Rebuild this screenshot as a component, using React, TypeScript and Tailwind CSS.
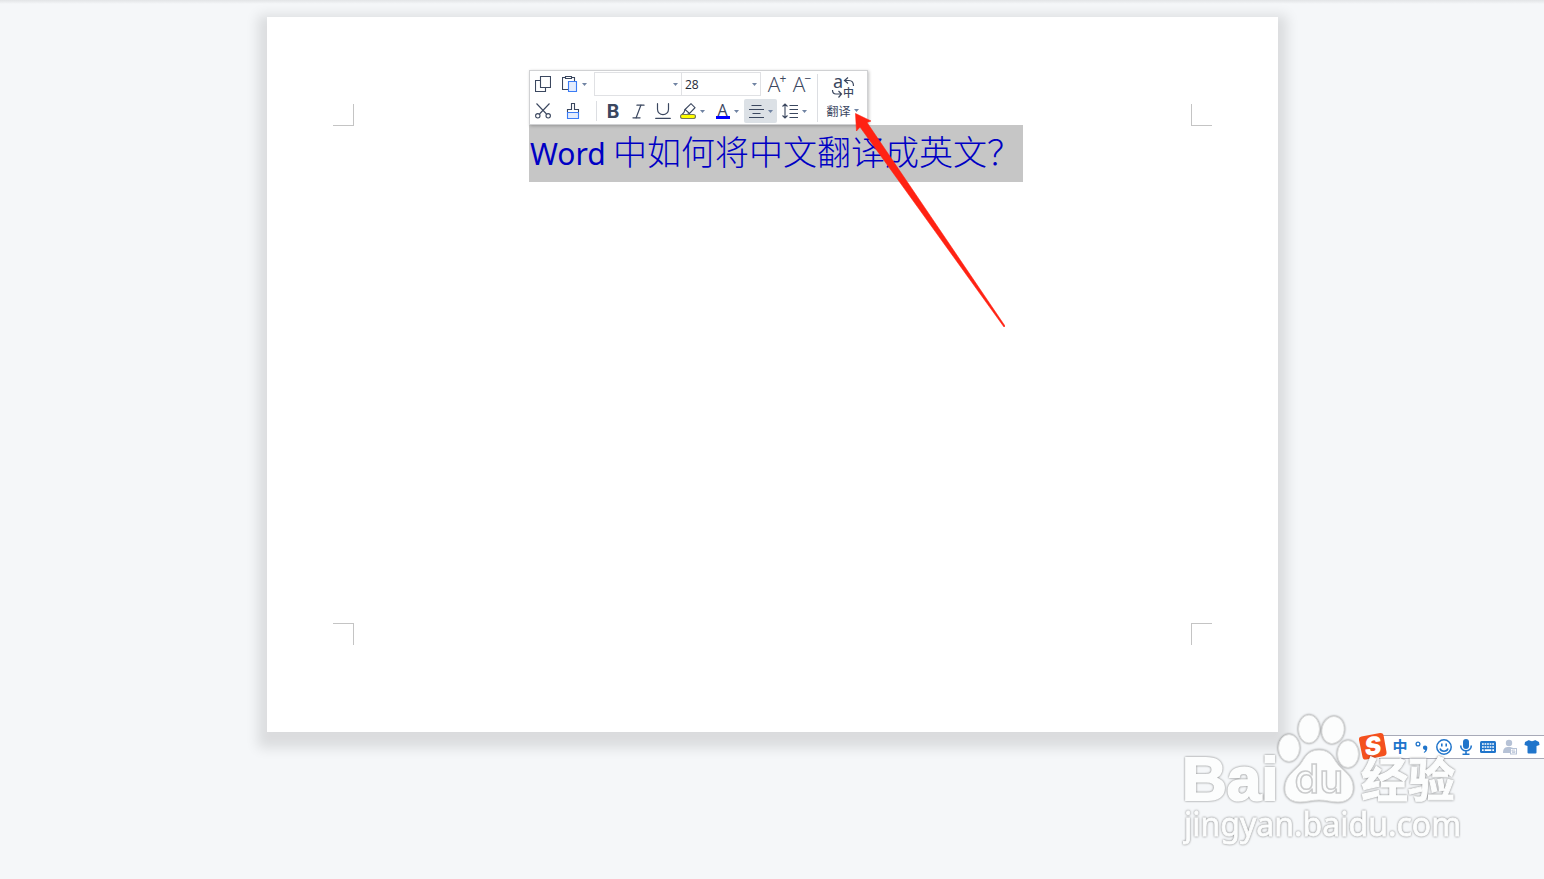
import type { ReactNode } from 'react';
import clsx from 'clsx';
import { Italic, Underline } from 'lucide-react';

interface ToolButtonProps {
  label: string;
  className?: string;
  caret?: boolean;
  children: ReactNode;
}

function Caret() {
  return (
    <svg width="5" height="3" viewBox="0 0 5 3" className="shrink-0">
      <path d="M0 0h5L2.5 3z" fill="#7083a3" />
    </svg>
  );
}

function ToolButton({ label, className, caret, children }: ToolButtonProps) {
  return (
    <button
      type="button"
      title={label}
      aria-label={label}
      className={clsx('flex h-6 items-center justify-center gap-1 leading-none', className)}
    >
      {children}
      {caret && <Caret />}
    </button>
  );
}

function CopyIcon() {
  return (
    <svg width="16" height="16" viewBox="0 0 16 16" fill="none" stroke="#3b475f" strokeWidth="1.1">
      <path d="M5.5.5h10v11h-10z" />
      <path d="M5.5 4.5h-5v11h10v-4" />
    </svg>
  );
}

function PasteIcon() {
  return (
    <svg width="16" height="16" viewBox="0 0 16 16" fill="none" stroke="#3b475f" strokeWidth="1.1">
      <path d="M6 13.500H.5v-12h3M9.500 1.500h3V5" />
      <path d="M3.500.5h6v2h-6z" />
      <path d="M6.500 5.500h8v10h-8z" fill="#e3ecfd" stroke="#3b7cf5" />
    </svg>
  );
}

function CutIcon() {
  return (
    <svg width="16" height="16" viewBox="0 0 16 16" fill="none" stroke="#3b475f" strokeWidth="1.1">
      <path d="M1.500.5L11.500 11M14.500.5L4.500 11" />
      <circle cx="2.800" cy="12.800" r="2.200" />
      <circle cx="13.200" cy="12.800" r="2.200" />
    </svg>
  );
}

function BrushIcon() {
  return (
    <svg width="14" height="16" viewBox="0 0 14 16" fill="none" strokeWidth="1.1">
      <path d="M1.500 9V6.500h4v-6h3v6h4V9" stroke="#3b475f" />
      <path d="M1.500 9.500h11v6h-11z" fill="#e3ecfd" stroke="#3b7cf5" />
    </svg>
  );
}

function HighlightIcon() {
  return (
    <svg width="16" height="16" viewBox="0 0 16 16" fill="none" stroke="#3b475f" strokeWidth="1.1">
      <path d="M5 6.500L11 .7l4 4L9.500 10.500z" />
      <path d="M5 6.500L4 9.500 2 11.500h5l2.500-1" />
      <rect x=".5" y="11.500" width="15" height="4" rx="2" fill="#ffff00" stroke="#77775a" />
    </svg>
  );
}

function CenterIcon() {
  return (
    <svg width="15" height="14" viewBox="0 0 15 14" stroke="#3b475f" strokeWidth="1.1">
      <path d="M2.500 1.500h10M0 5.500h15M3.500 9.500h8M0 13.500h15" />
    </svg>
  );
}

function SpacingIcon() {
  return (
    <svg width="16" height="16" viewBox="0 0 16 16" fill="none" stroke="#3b475f" strokeWidth="1.1">
      <path d="M3 1v14M.5 3.500L3 1l2.500 2.500M.5 12.500L3 15l2.500-2.500M7.500 2.500H16M7.500 6.500H16M7.500 10.500H16M7.500 14.500H16" />
    </svg>
  );
}

function TranslateIcon() {
  return (
    <svg width="24" height="24" viewBox="0 0 24 24" fill="none" stroke="#3b475f" strokeWidth="1.2" className="overflow-visible">
      <text x="2" y="13" fontSize="18" fill="#3b475f" stroke="none" className="font-['Noto_Sans']">a</text>
      <path d="M17 2.500l-3.500 3 3.500 3M13.500 5.500H18c3 0 4.500 1.500 4.500 5.500" />
      <path d="M1.500 15c0 3 1 4 3.500 4h5.500M7.500 16l3 3-3 3.500" />
      <text x="12" y="22" fontSize="11" fill="#3b475f" stroke="none" className="font-['Noto_Sans_CJK_SC',sans-serif] font-medium">中</text>
    </svg>
  );
}

function FloatingToolbar() {
  return (
    <div
      role="toolbar"
      aria-label="格式"
      className="absolute bottom-full left-0 flex items-center border border-[#d0d1d3] bg-white py-px text-[#3b475f] shadow-[1px_1px_3px_rgba(0,0,0,0.25)]"
    >
      <div className="flex w-[283px] flex-col gap-[3px]">
        <div className="flex items-center">
          <ToolButton label="复制" className="w-[26px]"><CopyIcon /></ToolButton>
          <ToolButton label="粘贴" className="w-[38px] pr-0.5" caret><PasteIcon /></ToolButton>
          <div className="relative flex w-[88px] items-center">
            <select aria-label="字体" className="h-6 w-full appearance-none border border-[#e0e1e4] bg-white px-1 text-xs">
              <option></option>
            </select>
            <span className="pointer-events-none absolute right-1"><Caret /></span>
          </div>
          <div className="relative -ml-px flex w-20 items-center">
            <select aria-label="字号" className="h-6 w-full appearance-none border border-[#e0e1e4] bg-white px-[3px] pt-px font-['Open_Sans'] text-xs text-[#1f2937]">
              <option>28</option>
            </select>
            <span className="pointer-events-none absolute right-1"><Caret /></span>
          </div>
          <ToolButton label="增大字号" className="ml-0.5 w-7">
            <span className="flex items-start font-['Open_Sans'] text-[21px] leading-5 font-light">
              A<span className="-ml-px text-xs leading-2.5 font-normal">+</span>
            </span>
          </ToolButton>
          <ToolButton label="减小字号" className="w-[22px]">
            <span className="flex items-start font-['Open_Sans'] text-[21px] leading-5 font-light">
              A<span className="-ml-px text-xs leading-2.5 font-normal">−</span>
            </span>
          </ToolButton>
        </div>
        <div className="flex items-center">
          <ToolButton label="剪切" className="w-[26px]"><CutIcon /></ToolButton>
          <ToolButton label="格式刷" className="w-[34px]"><BrushIcon /></ToolButton>
          <span className="mr-[3px] ml-1.5 h-5 w-px bg-[#dcdee2]" />
          <ToolButton label="加粗" className="w-[26px] font-[Inter] text-[19px] font-bold">B</ToolButton>
          <ToolButton label="倾斜" className="w-6"><Italic size={19} strokeWidth={1.5} /></ToolButton>
          <ToolButton label="下划线" className="w-[25px]"><Underline size={22} strokeWidth={1.3} /></ToolButton>
          <ToolButton label="突出显示" className="w-[35px]" caret><HighlightIcon /></ToolButton>
          <ToolButton label="字体颜色" className="w-[34px]" caret>
            <span className="w-3.5 border-b-3 border-[#0000ff] font-['Open_Sans'] text-base leading-3">A</span>
          </ToolButton>
          <ToolButton label="居中" className="w-[33px] rounded-xs bg-[#dce1e6]" caret><CenterIcon /></ToolButton>
          <ToolButton label="行距" className="w-[35px]" caret><SpacingIcon /></ToolButton>
        </div>
      </div>
      <span className="ml-1 h-12 w-px bg-[#dcdee2]" />
      <button type="button" className="flex w-[49px] flex-col items-center gap-0.5">
        <TranslateIcon />
        <span className="flex items-center gap-[3px] font-['Noto_Sans_CJK_SC',sans-serif] text-xs leading-5">
          翻译
          <Caret />
        </span>
      </button>
    </div>
  );
}

function PointerArrow() {
  return (
    <svg width="150" height="214" viewBox="0 0 150 214" className="pointer-events-none absolute -top-3 left-[326px]">
      <path d="M.5.5L16 8l-4 1.500L150 213l-1 1L5 14 1.500 18z" fill="#ff2213" stroke="#ff2213" strokeWidth=".6" />
    </svg>
  );
}

function CropMark({ className }: { className: string }) {
  return <span className={clsx('h-[22px] w-[21px] shrink-0 border-[#c4c4c4]', className)} />;
}

function SogouLogo() {
  return (
    <svg width="30" height="30" viewBox="0 0 30 30" className="relative shrink-0 overflow-visible">
      <path d="M2.500 4.500L21 1c2-.3 3 .5 3.500 2l3 17c.3 2-.5 3.500-2.500 4L7 27.500c-2 .3-3-.5-3.500-2.500L0 8c-.2-2 .5-3.200 2.500-3.500z" fill="#f4511e" />
      <text x="14" y="23" fontSize="25" fill="#fff" textAnchor="middle" transform="rotate(-8 14 15)" className="font-[Inter] font-black italic">S</text>
    </svg>
  );
}

const imeItems = [
  {
    label: '中文',
    icon: <text x="9" y="14" fontSize="15" textAnchor="middle" className="font-['Noto_Sans_CJK_SC',sans-serif] font-bold">中</text>,
  },
  {
    label: '标点',
    icon: (
      <>
        <circle cx="5" cy="6" r="1.900" fill="none" stroke="currentColor" strokeWidth="1.300" />
        <path d="M12 7.500a2.300 2.300 0 0 1 2.300 2.500c0 2.600-1.400 4.300-3.400 5v-1.200c1-.6 1.400-1.200 1.300-1.900a2.200 2.200 0 0 1-.2-4.400z" />
      </>
    ),
  },
  {
    label: '表情',
    icon: (
      <>
        <circle cx="9" cy="9" r="7.200" fill="none" stroke="currentColor" strokeWidth="1.500" />
        <path d="M6 5.500h1.600v3H6zM10.400 5.500H12v3h-1.600z" />
        <path d="M5 10.500c1 3.500 7 3.500 8 0" fill="none" stroke="currentColor" strokeWidth="1.500" />
      </>
    ),
  },
  {
    label: '语音',
    icon: (
      <>
        <rect x="6" y="1" width="6" height="10" rx="3" />
        <path d="M3.700 7.500c0 7 10.600 7 10.600 0M9 12.500V16M5.500 16.200h7" fill="none" stroke="currentColor" strokeWidth="1.600" />
      </>
    ),
  },
  {
    label: '软键盘',
    icon: (
      <>
        <rect x="1" y="3" width="16" height="12" rx="1.500" />
        <path d="M3 6h12M3 9h12" stroke="#fff" strokeWidth="1.700" strokeDasharray="1.750 .8" />
        <path d="M3 12.200h1.700M5.700 12.200h6.600M13.300 12.200H15" stroke="#fff" strokeWidth="1.700" />
      </>
    ),
  },
  {
    label: '账号',
    muted: true,
    icon: (
      <>
        <circle cx="8" cy="5" r="3.200" />
        <path d="M2 15c0-5 2-6 6-6 2 0 3.500.5 4.500 1.500H9V15z" />
        <rect x="9.500" y="10.500" width="6" height="5.500" fill="#fff" stroke="currentColor" />
        <path d="M14 12h-3v1.300h3v1.200h-3" fill="none" stroke="currentColor" strokeWidth=".8" />
      </>
    ),
  },
  {
    label: '皮肤',
    icon: <path d="M6 2c1 1.500 5 1.500 6 0l4 2 .5 3-3 1v6.500q0 1-1 1h-7q-1 0-1-1V8l-3-1L2 4z" />,
  },
];

function ImeBar() {
  return (
    <div className="absolute right-0 bottom-[117px] flex flex-row-reverse items-center">
      <div className="-ml-2.5 flex h-6 items-center border-y border-[#a8aab8] bg-white pr-px pl-2.5">
        {imeItems.map((item) => (
          <button
            key={item.label}
            type="button"
            aria-label={item.label}
            className={clsx('flex w-[22px] justify-center', item.muted ? 'text-[#b6c2d6]' : 'text-[#2075cb]')}
          >
            <svg width="18" height="18" viewBox="0 0 18 18" fill="currentColor" className="overflow-visible">{item.icon}</svg>
          </button>
        ))}
      </div>
      <SogouLogo />
    </div>
  );
}

function Watermark() {
  return (
    <svg
      width="280"
      height="136"
      viewBox="0 0 280 136"
      className="pointer-events-none absolute right-[81px] bottom-[31px] drop-shadow-[0_0_1px_rgba(0,0,0,0.5)]"
      fill="#fcfdfd"
    >
      <g stroke="#dcdddd" strokeWidth="1">
        <ellipse cx="106" cy="36" rx="10.500" ry="13.500" />
        <ellipse cx="126" cy="17" rx="10.500" ry="14" />
        <ellipse cx="150" cy="18" rx="11" ry="13.500" transform="rotate(12 150 18)" />
        <ellipse cx="165" cy="42" rx="10.500" ry="13.500" />
        <path d="M136 38c-9 0-13 5-17 12-5 8-16 12-17 25-1 10 6 15 15 15 7 0 12-2 19-2s12 2 19 2c10 0 16-6 15-16-1-12-12-16-17-24-4-7-8-12-17-12z" />
      </g>
      <text x="-1" y="88" fontSize="62" stroke="#fcfdfd" strokeWidth="2" className="font-['Liberation_Sans'] font-bold">Bai</text>
      <text x="136" y="81" fontSize="40" textAnchor="middle" stroke="#cacbcc" strokeWidth="1.500" className="font-[Inter] font-medium">du</text>
      <text x="178" y="85" fontSize="47" stroke="#fcfdfd" strokeWidth="1" className="font-['Noto_Sans_CJK_SC',sans-serif] font-bold">经验</text>
      <text x="1" y="124" fontSize="32" stroke="#fcfdfd" strokeWidth=".8" className="font-['Noto_Sans']">jingyan.baidu.com</text>
    </svg>
  );
}

export default function App() {
  return (
    <div className="relative min-h-screen overflow-hidden bg-[#f5f7f9] pt-[17px]">
      <div className="absolute inset-x-0 top-0 h-1 bg-linear-to-b from-[#e2e4e6] to-[#f5f7f9]" />
      <main className="mx-auto flex aspect-[1011/715] w-full max-w-[1011px] flex-col justify-between bg-white px-[66px] py-[87px] shadow-[0_7px_12px_9px_rgba(0,0,0,0.11)]">
        <div className="flex items-start justify-between">
          <CropMark className="border-r border-b" />
          <div className="relative mt-[21px] ml-2 flex h-[57px] w-[494px] items-center bg-[#c6c6c6]">
            <h1 className="flex items-center whitespace-nowrap text-[#0000c4]">
              <span className="w-[84px] pl-px font-['Noto_Sans'] text-[30px] leading-10">Word</span>
              <span className="pb-1.5 font-['Noto_Sans_CJK_SC',sans-serif] text-[34px] leading-10 font-light">中如何将中文翻译成英文？</span>
            </h1>
            <FloatingToolbar />
            <PointerArrow />
          </div>
          <CropMark className="border-b border-l" />
        </div>
        <div className="flex items-end justify-between">
          <CropMark className="border-t border-r" />
          <CropMark className="border-t border-l" />
        </div>
      </main>
      <ImeBar />
      <Watermark />
    </div>
  );
}
